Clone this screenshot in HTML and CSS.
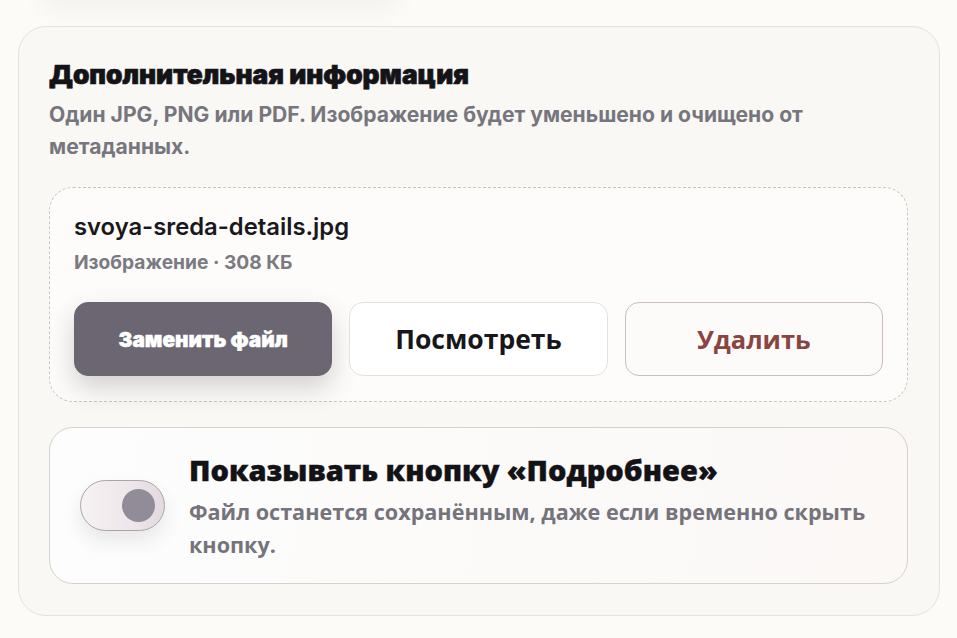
FILE: index.html
```html
<!DOCTYPE html>
<html lang="ru">
<head>
<meta charset="utf-8">
<title>Дополнительная информация</title>
<link rel="stylesheet" href="styles.css">
</head>
<body>
<div class="page">
  <div class="prev-card"></div>
  <section class="card">
    <h2 class="card-title">Дополнительная информация</h2>
    <p class="card-sub">Один JPG, PNG или PDF. Изображение будет уменьшено и очищено от метаданных.</p>
    <div class="dropzone">
      <div class="file-name">svoya-sreda-details.jpg</div>
      <div class="file-meta">Изображение · 308 КБ</div>
      <div class="actions">
        <button class="btn btn-primary">Заменить файл</button>
        <button class="btn btn-ghost">Посмотреть</button>
        <button class="btn btn-danger">Удалить</button>
      </div>
    </div>
    <div class="toggle-card">
      <div class="switch"><span class="knob"></span></div>
      <div class="toggle-text">
        <div class="toggle-title">Показывать кнопку «Подробнее»</div>
        <div class="toggle-desc">Файл останется сохранённым, даже если временно скрыть кнопку.</div>
      </div>
    </div>
  </section>
</div>
</body>
</html>
```

FILE: styles.css
```css
* { box-sizing: border-box; }
html, body {
  margin: 0;
  padding: 0;
  background: #fcfbf8;
}
body {
  font-family: "Inter", "Open Sans", sans-serif;
  color: #18171c;
  overflow: hidden;
}
.page {
  position: relative;
  padding: 26px 17px 0 18px;
  height: 638px;
}
.prev-card {
  position: absolute;
  left: 40px;
  top: -60px;
  width: 360px;
  height: 60px;
  border-radius: 24px;
  box-shadow: 0 10px 22px rgba(120, 110, 100, 0.07);
}
.card {
  background: #f9f8f4;
  border: 1px solid #e4e2dc;
  border-radius: 28px;
  padding: 30px 31px 31px 30px;
}
.card-title {
  margin: 0;
  font-family: "Inter", sans-serif;
  font-weight: 900;
  font-size: 26.3px;
  line-height: 36px;
  color: #141318;
  -webkit-text-stroke: 0.7px #141318;
}
.card-sub {
  margin: 6px 0 0 0;
  font-family: "Inter", sans-serif;
  font-weight: 700;
  font-size: 21.1px;
  line-height: 32px;
  color: #77767e;
}
.dropzone {
  margin-top: 24px;
  background: #fdfcfa;
  border: 1px dashed #c9c6c2;
  border-radius: 24px;
  padding: 24px 24px 25px 24px;
}
.file-name {
  font-family: "Inter", sans-serif;
  font-weight: 600;
  font-size: 23.8px;
  line-height: 30px;
  color: #19181d;
}
.file-meta {
  margin-top: 8px;
  font-family: "Inter", sans-serif;
  font-weight: 700;
  font-size: 19.2px;
  line-height: 24px;
  color: #7b7a82;
}
.actions {
  margin-top: 28px;
  display: grid;
  grid-template-columns: 1fr 1fr 1fr;
  gap: 17px;
}
.btn {
  height: 74px;
  border-radius: 14px;
  cursor: pointer;
}
.btn-primary {
  background: #6c6672;
  border: 1px solid #6c6672;
  color: #ffffff;
  font-family: "Inter", sans-serif;
  font-weight: 900;
  font-size: 20.8px;
  -webkit-text-stroke: 0.5px #ffffff;
  box-shadow: 0 12px 26px rgba(70, 60, 70, 0.22);
}
.btn-ghost {
  background: #ffffff;
  border: 1px solid #e4e1dd;
  color: #17161b;
  font-family: "Open Sans", sans-serif;
  font-weight: 700;
  font-size: 26.5px;
}
.btn-danger {
  background: #fdfafa;
  border: 1px solid #cdbdb9;
  color: #8a4541;
  font-family: "Open Sans", sans-serif;
  font-weight: 700;
  font-size: 25.5px;
}
.toggle-card {
  margin-top: 25px;
  display: flex;
  align-items: center;
  gap: 24px;
  height: 157px;
  padding: 0 30px 0 30px;
  border: 1px solid #d6d2ce;
  border-radius: 24px;
  background: linear-gradient(100deg, #fdfdfd 0%, #fbf8f6 100%);
}
.switch {
  flex: 0 0 auto;
  width: 85px;
  height: 51px;
  border-radius: 26px;
  border: 1px solid #aaa4a8;
  background: linear-gradient(90deg, #f6f2f3 0%, #eee6ea 60%, #e3d9df 100%);
  box-shadow: 0 10px 18px rgba(90, 80, 90, 0.12);
  display: flex;
  align-items: center;
  justify-content: flex-end;
  padding-right: 9px;
}
.knob {
  width: 33px;
  height: 33px;
  border-radius: 50%;
  background: #928c99;
}
.toggle-text {
  flex: 1 1 auto;
}
.toggle-title {
  font-family: "Open Sans", sans-serif;
  font-weight: 800;
  font-size: 29px;
  line-height: 38px;
  color: #131217;
  -webkit-text-stroke: 0.4px #131217;
}
.toggle-desc {
  margin-top: 6px;
  font-family: "Open Sans", sans-serif;
  font-weight: 700;
  font-size: 21.6px;
  line-height: 33px;
  color: #75737b;
}
```
